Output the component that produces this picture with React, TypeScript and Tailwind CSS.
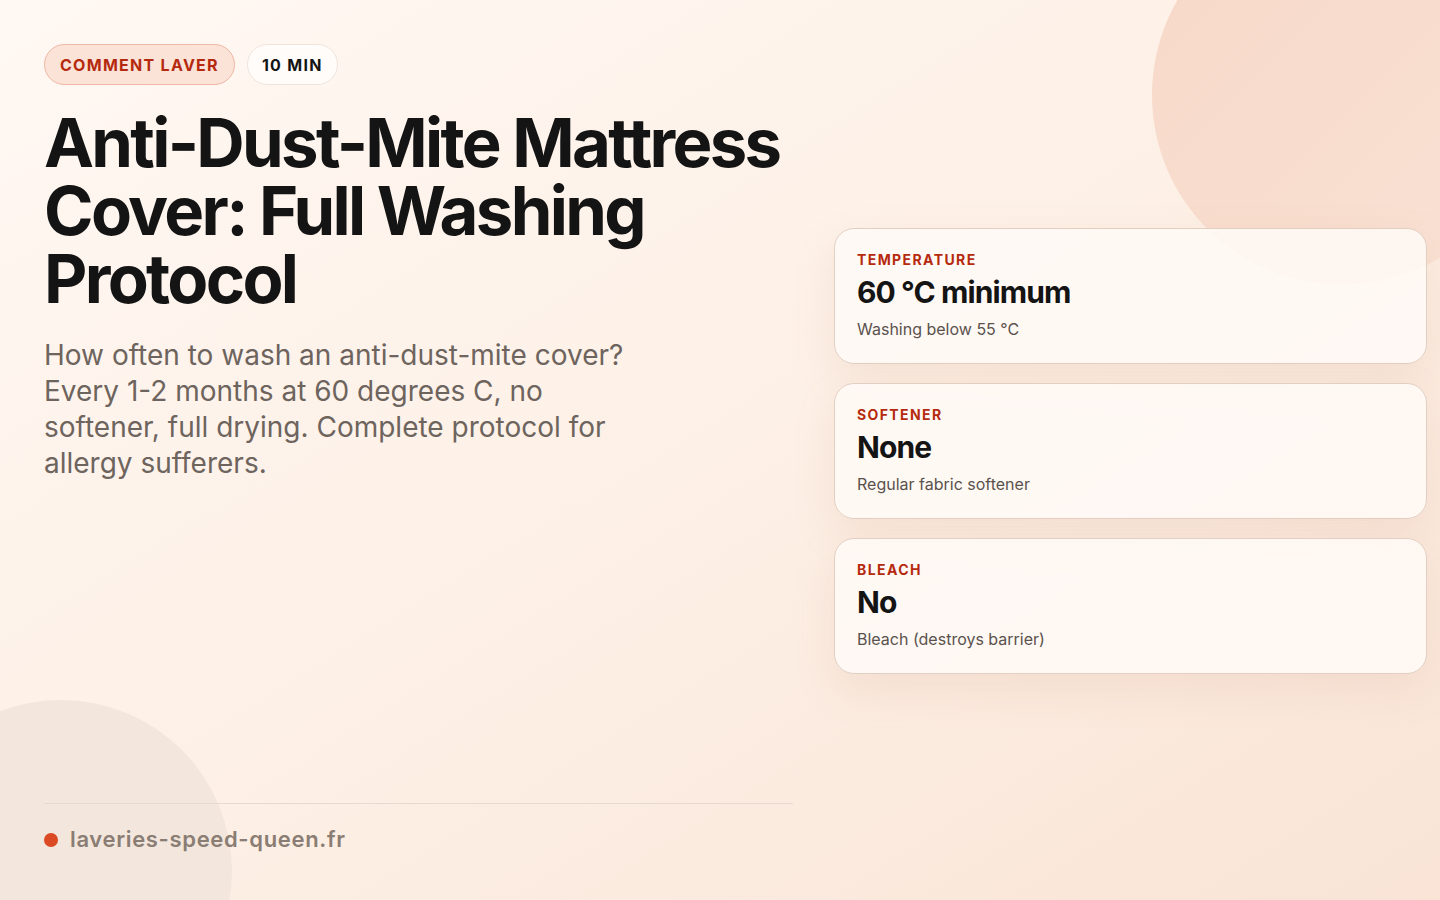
export default function App() {
  const cards = [
    { k: "TEMPERATURE", v: "60 °C minimum", s: "Washing below 55 °C" },
    { k: "SOFTENER", v: "None", s: "Regular fabric softener" },
    { k: "BLEACH", v: "No", s: "Bleach (destroys barrier)" },
  ];
  return (
    <div className="relative w-[1440px] h-[900px] overflow-hidden bg-gradient-to-br from-[#fff8f3] via-[#fdf0e6] to-[#f9e4d6]" style={{ fontFamily: "Inter, 'Noto Sans', sans-serif" }}>
      <div className="absolute left-[1152px] top-[-95px] w-[380px] h-[380px] rounded-full bg-gradient-to-br from-[#f7d8c8] to-[#f9e2d4]" />
      <div className="absolute left-[-110px] top-[700px] w-[342px] h-[342px] rounded-full bg-[#f3e7dd]" />
      <div className="relative flex h-full">
        <div className="w-[749px] ml-[44px] flex flex-col pt-[44px] pb-[44px]">
          <div className="flex gap-3">
            <span className="h-[41px] px-[15px] flex items-center rounded-full border border-[#f0b7a2] bg-[#fbe3d8] text-[#b52a0e] text-[16px] font-bold tracking-[0.08em]">COMMENT LAVER</span>
            <span className="h-[41px] px-[14px] flex items-center rounded-full border border-[#efe4dc] bg-[#fffcfa] text-[#141414] text-[16px] font-bold tracking-[0.08em]">10 MIN</span>
          </div>
          <h1 className="mt-[24px] text-[67px] leading-[68px] font-bold tracking-[-0.04em] text-[#141414]">Anti-Dust-Mite Mattress Cover: Full Washing Protocol</h1>
          <p className="mt-[24px] w-[600px] text-[28px] leading-[36px] text-[#6e645e]">How often to wash an anti-dust-mite cover? Every 1-2 months at 60 degrees C, no softener, full drying. Complete protocol for allergy sufferers.</p>
          <div className="mt-auto border-t border-[#e6d9cf] pt-[19px] flex items-center gap-3">
            <span className="w-[14px] h-[14px] rounded-full bg-[#dc4a24]" />
            <span className="text-[22px] font-semibold text-[#8a7d74] tracking-[0.03em]">laveries-speed-queen.fr</span>
          </div>
        </div>
        <div className="ml-[41px] w-[593px] pt-[228px] flex flex-col gap-[19px]">
          {cards.map((c) => (
            <div key={c.k} className="h-[136px] rounded-[20px] border border-[#e3cfc2] bg-[#fffaf7]/85 shadow-[0_16px_40px_rgba(200,150,120,0.15)] px-[22px] pt-[22px]">
              <div className="text-[14px] leading-[18px] font-bold tracking-[0.1em] text-[#b52a0e]">{c.k}</div>
              <div className="mt-[4px] text-[30px] leading-[38px] font-bold tracking-[-0.03em] text-[#141414]">{c.v}</div>
              <div className="mt-[8px] text-[16px] leading-[20px] text-[#5a524d]">{c.s}</div>
            </div>
          ))}
        </div>
      </div>
    </div>
  );
}
